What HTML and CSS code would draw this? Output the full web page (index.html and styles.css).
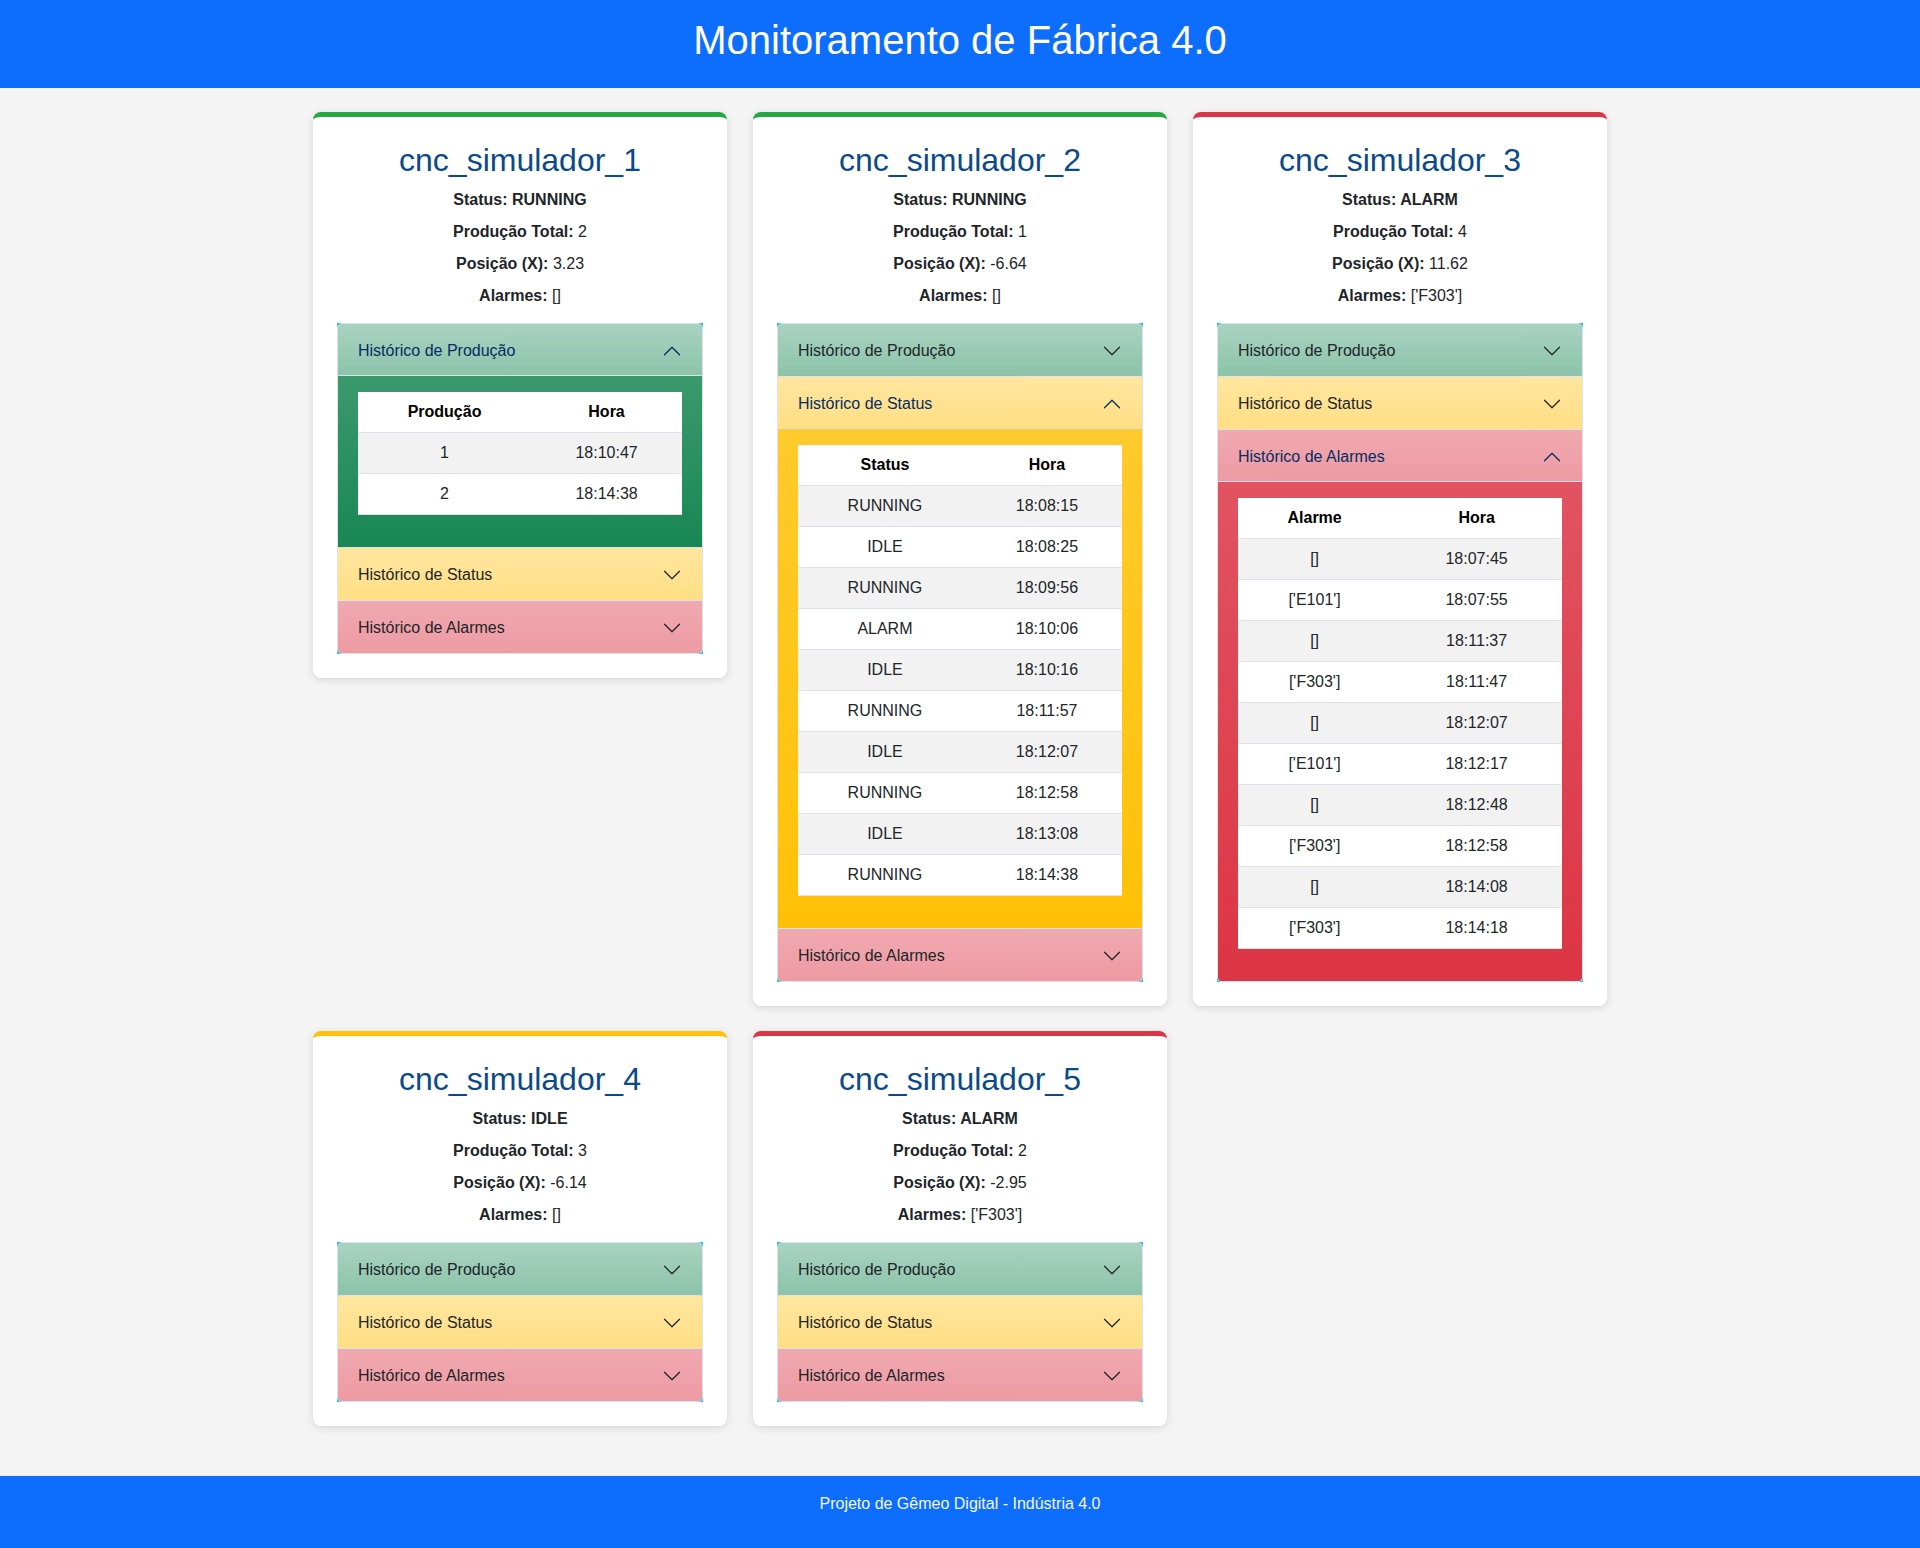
FILE: index.html
```html
<!DOCTYPE html>
<html lang="pt-BR">
<head>
<meta charset="utf-8">
<title>Monitoramento de Fábrica 4.0</title>
<link rel="stylesheet" href="styles.css">
</head>
<body>
<header class="top">
  <h1>Monitoramento de Fábrica 4.0</h1>
</header>
<main class="main">
  <div class="grid">
    <!-- card 1 -->
    <section class="card card-running">
      <h2 class="card-title">cnc_simulador_1</h2>
      <p><b>Status: RUNNING</b></p>
      <p><b>Produção Total:</b> 2</p>
      <p><b>Posição (X):</b> 3.23</p>
      <p><b>Alarmes:</b> []</p>
      <div class="accordion">
        <div class="acc-item item-prod">
          <button class="acc-btn open">Histórico de Produção<svg class="chev" viewBox="0 0 16 16"><path d="M2 5L8 11L14 5"/></svg></button>
          <div class="acc-body body-prod">
            <table class="tbl">
              <thead><tr><th>Produção</th><th>Hora</th></tr></thead>
              <tbody>
                <tr><td>1</td><td>18:10:47</td></tr>
                <tr><td>2</td><td>18:14:38</td></tr>
              </tbody>
            </table>
          </div>
        </div>
        <div class="acc-item item-status">
          <button class="acc-btn">Histórico de Status<svg class="chev" viewBox="0 0 16 16"><path d="M2 5L8 11L14 5"/></svg></button>
        </div>
        <div class="acc-item item-alarm">
          <button class="acc-btn">Histórico de Alarmes<svg class="chev" viewBox="0 0 16 16"><path d="M2 5L8 11L14 5"/></svg></button>
        </div>
      </div>
    </section>

    <!-- card 2 -->
    <section class="card card-running">
      <h2 class="card-title">cnc_simulador_2</h2>
      <p><b>Status: RUNNING</b></p>
      <p><b>Produção Total:</b> 1</p>
      <p><b>Posição (X):</b> -6.64</p>
      <p><b>Alarmes:</b> []</p>
      <div class="accordion">
        <div class="acc-item item-prod">
          <button class="acc-btn">Histórico de Produção<svg class="chev" viewBox="0 0 16 16"><path d="M2 5L8 11L14 5"/></svg></button>
        </div>
        <div class="acc-item item-status">
          <button class="acc-btn open">Histórico de Status<svg class="chev" viewBox="0 0 16 16"><path d="M2 5L8 11L14 5"/></svg></button>
          <div class="acc-body body-status">
            <table class="tbl">
              <thead><tr><th>Status</th><th>Hora</th></tr></thead>
              <tbody>
                <tr><td>RUNNING</td><td>18:08:15</td></tr>
                <tr><td>IDLE</td><td>18:08:25</td></tr>
                <tr><td>RUNNING</td><td>18:09:56</td></tr>
                <tr><td>ALARM</td><td>18:10:06</td></tr>
                <tr><td>IDLE</td><td>18:10:16</td></tr>
                <tr><td>RUNNING</td><td>18:11:57</td></tr>
                <tr><td>IDLE</td><td>18:12:07</td></tr>
                <tr><td>RUNNING</td><td>18:12:58</td></tr>
                <tr><td>IDLE</td><td>18:13:08</td></tr>
                <tr><td>RUNNING</td><td>18:14:38</td></tr>
              </tbody>
            </table>
          </div>
        </div>
        <div class="acc-item item-alarm">
          <button class="acc-btn">Histórico de Alarmes<svg class="chev" viewBox="0 0 16 16"><path d="M2 5L8 11L14 5"/></svg></button>
        </div>
      </div>
    </section>

    <!-- card 3 -->
    <section class="card card-alarm">
      <h2 class="card-title">cnc_simulador_3</h2>
      <p><b>Status: ALARM</b></p>
      <p><b>Produção Total:</b> 4</p>
      <p><b>Posição (X):</b> 11.62</p>
      <p><b>Alarmes:</b> ['F303']</p>
      <div class="accordion">
        <div class="acc-item item-prod">
          <button class="acc-btn">Histórico de Produção<svg class="chev" viewBox="0 0 16 16"><path d="M2 5L8 11L14 5"/></svg></button>
        </div>
        <div class="acc-item item-status">
          <button class="acc-btn">Histórico de Status<svg class="chev" viewBox="0 0 16 16"><path d="M2 5L8 11L14 5"/></svg></button>
        </div>
        <div class="acc-item item-alarm">
          <button class="acc-btn open">Histórico de Alarmes<svg class="chev" viewBox="0 0 16 16"><path d="M2 5L8 11L14 5"/></svg></button>
          <div class="acc-body body-alarm">
            <table class="tbl">
              <thead><tr><th>Alarme</th><th>Hora</th></tr></thead>
              <tbody>
                <tr><td>[]</td><td>18:07:45</td></tr>
                <tr><td>['E101']</td><td>18:07:55</td></tr>
                <tr><td>[]</td><td>18:11:37</td></tr>
                <tr><td>['F303']</td><td>18:11:47</td></tr>
                <tr><td>[]</td><td>18:12:07</td></tr>
                <tr><td>['E101']</td><td>18:12:17</td></tr>
                <tr><td>[]</td><td>18:12:48</td></tr>
                <tr><td>['F303']</td><td>18:12:58</td></tr>
                <tr><td>[]</td><td>18:14:08</td></tr>
                <tr><td>['F303']</td><td>18:14:18</td></tr>
              </tbody>
            </table>
          </div>
        </div>
      </div>
    </section>

    <!-- card 4 -->
    <section class="card card-idle">
      <h2 class="card-title">cnc_simulador_4</h2>
      <p><b>Status: IDLE</b></p>
      <p><b>Produção Total:</b> 3</p>
      <p><b>Posição (X):</b> -6.14</p>
      <p><b>Alarmes:</b> []</p>
      <div class="accordion">
        <div class="acc-item item-prod">
          <button class="acc-btn">Histórico de Produção<svg class="chev" viewBox="0 0 16 16"><path d="M2 5L8 11L14 5"/></svg></button>
        </div>
        <div class="acc-item item-status">
          <button class="acc-btn">Histórico de Status<svg class="chev" viewBox="0 0 16 16"><path d="M2 5L8 11L14 5"/></svg></button>
        </div>
        <div class="acc-item item-alarm">
          <button class="acc-btn">Histórico de Alarmes<svg class="chev" viewBox="0 0 16 16"><path d="M2 5L8 11L14 5"/></svg></button>
        </div>
      </div>
    </section>

    <!-- card 5 -->
    <section class="card card-alarm">
      <h2 class="card-title">cnc_simulador_5</h2>
      <p><b>Status: ALARM</b></p>
      <p><b>Produção Total:</b> 2</p>
      <p><b>Posição (X):</b> -2.95</p>
      <p><b>Alarmes:</b> ['F303']</p>
      <div class="accordion">
        <div class="acc-item item-prod">
          <button class="acc-btn">Histórico de Produção<svg class="chev" viewBox="0 0 16 16"><path d="M2 5L8 11L14 5"/></svg></button>
        </div>
        <div class="acc-item item-status">
          <button class="acc-btn">Histórico de Status<svg class="chev" viewBox="0 0 16 16"><path d="M2 5L8 11L14 5"/></svg></button>
        </div>
        <div class="acc-item item-alarm">
          <button class="acc-btn">Histórico de Alarmes<svg class="chev" viewBox="0 0 16 16"><path d="M2 5L8 11L14 5"/></svg></button>
        </div>
      </div>
    </section>
  </div>
</main>
<footer class="foot">
  <p>Projeto de Gêmeo Digital - Indústria 4.0</p>
</footer>
</body>
</html>
```

FILE: styles.css
```css
* { box-sizing: border-box; }

html, body {
  margin: 0;
  padding: 0;
}

body {
  font-family: "Liberation Sans", Arial, sans-serif;
  font-size: 16px;
  line-height: 1.5;
  color: #212529;
  background: #f4f4f4;
}

.top {
  background: #0d6efd;
  color: #fff;
  text-align: center;
  padding: 16px 0;
}

.top h1 {
  margin: 0 0 8px;
  font-size: 40px;
  font-weight: 400;
  line-height: 48px;
}

.main {
  padding: 24px 0 50px;
}

.grid {
  display: grid;
  grid-template-columns: repeat(3, 414px);
  column-gap: 26px;
  row-gap: 25px;
  justify-content: center;
  align-items: start;
}

.card {
  background: #fff;
  border-radius: 8px;
  border-top: 5px solid #28a745;
  box-shadow: 0 2px 8px rgba(0, 0, 0, 0.12);
  padding: 24px;
  text-align: center;
}

.card-running { border-top-color: #28a745; }
.card-alarm { border-top-color: #dc3545; }
.card-idle { border-top-color: #ffc107; }

.card-title {
  margin: 0 0 8px;
  font-size: 32px;
  font-weight: 400;
  line-height: 39px;
  color: #0b4a8a;
}

.card p {
  margin: 0 0 8px;
  line-height: 24px;
}

.card b { font-weight: 700; }

.accordion {
  margin-top: 15px;
  background: #2cbbe6;
  text-align: left;
}

.acc-item {
  border: 1px solid #dee2e6;
  border-top: 0;
  overflow: hidden;
}

.acc-item:first-child {
  border-top: 1px solid #dee2e6;
  border-top-left-radius: 5px;
  border-top-right-radius: 5px;
}

.acc-item:last-child {
  border-bottom-left-radius: 5px;
  border-bottom-right-radius: 5px;
}

.acc-btn {
  display: flex;
  align-items: center;
  justify-content: space-between;
  width: 100%;
  border: 0;
  margin: 0;
  padding: 15px 20px 13px;
  font-family: inherit;
  font-size: 16px;
  line-height: 24px;
  color: #212529;
  text-align: left;
  cursor: pointer;
}

.chev {
  width: 20px;
  height: 20px;
  flex: none;
  fill: none;
  stroke: #212529;
  stroke-width: 1;
  stroke-linecap: round;
  stroke-linejoin: round;
}

.acc-btn.open {
  color: #052c65;
  box-shadow: inset 0 -1px 0 #dee2e6;
}

.acc-btn.open .chev {
  stroke: #052c65;
  transform: rotate(180deg);
}

.item-prod .acc-btn {
  background: linear-gradient(180deg, #a9d3c1, #8cc3aa);
}

.item-status .acc-btn {
  background: linear-gradient(180deg, #ffe6a0, #ffdf84);
}

.item-alarm .acc-btn {
  background: linear-gradient(180deg, #f0a9b0, #ee9aa2);
}

.acc-body {
  padding: 16px 20px;
}

.body-prod {
  background: #198754 linear-gradient(180deg, rgba(255,255,255,0.15), rgba(255,255,255,0));
}

.body-status {
  background: #ffc107 linear-gradient(180deg, rgba(255,255,255,0.15), rgba(255,255,255,0));
}

.body-alarm {
  background: #dc3545 linear-gradient(180deg, rgba(255,255,255,0.15), rgba(255,255,255,0));
}

.tbl {
  width: 100%;
  border-collapse: collapse;
  background: #fff;
  margin-bottom: 16px;
  color: #212529;
}

.tbl th,
.tbl td {
  padding: 8px;
  line-height: 24px;
  text-align: center;
  border-bottom: 1px solid #dee2e6;
}

.tbl th {
  font-weight: 700;
  color: #000;
}

.tbl tbody tr:nth-child(odd) td {
  background: #f2f2f2;
}

.foot {
  background: #0d6efd;
  color: #f4f6fa;
  text-align: center;
  padding: 16px 0;
}

.foot p {
  margin: 0 0 16px;
  line-height: 24px;
}
```
